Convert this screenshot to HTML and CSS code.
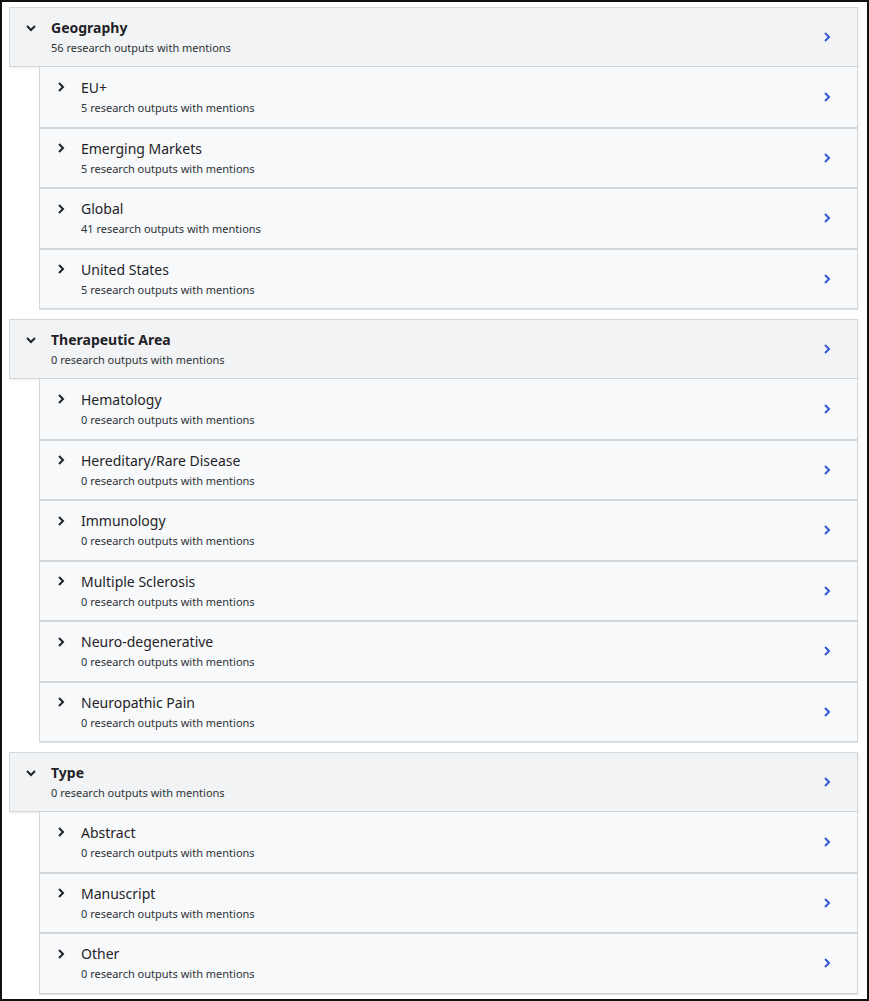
FILE: index.html
```html
<!DOCTYPE html>
<html>
<head>
<meta charset="utf-8">
<link rel="stylesheet" href="styles.css">
</head>
<body>
<div class="frame">
  <section class="group">
    <div class="row head">
      <span class="caret"><svg width="12" height="8" viewBox="0 0 12 8"><path d="M2 2l4 4 4-4" fill="none" stroke="#1f2328" stroke-width="2"/></svg></span>
      <div class="txt"><div class="title">Geography</div><div class="sub">56 research outputs with mentions</div></div>
      <span class="go"><svg width="8" height="12" viewBox="0 0 8 12"><path d="M2 2l4 4-4 4" fill="none" stroke="#3457d5" stroke-width="2"/></svg></span>
    </div>
    <div class="kids">
      <div class="row kid">
        <span class="caret"><svg width="8" height="12" viewBox="0 0 8 12"><path d="M2 2l4 4-4 4" fill="none" stroke="#1f2328" stroke-width="2"/></svg></span>
        <div class="txt"><div class="title">EU+</div><div class="sub">5 research outputs with mentions</div></div>
        <span class="go"><svg width="8" height="12" viewBox="0 0 8 12"><path d="M2 2l4 4-4 4" fill="none" stroke="#3457d5" stroke-width="2"/></svg></span>
      </div>
      <div class="row kid">
        <span class="caret"><svg width="8" height="12" viewBox="0 0 8 12"><path d="M2 2l4 4-4 4" fill="none" stroke="#1f2328" stroke-width="2"/></svg></span>
        <div class="txt"><div class="title">Emerging Markets</div><div class="sub">5 research outputs with mentions</div></div>
        <span class="go"><svg width="8" height="12" viewBox="0 0 8 12"><path d="M2 2l4 4-4 4" fill="none" stroke="#3457d5" stroke-width="2"/></svg></span>
      </div>
      <div class="row kid">
        <span class="caret"><svg width="8" height="12" viewBox="0 0 8 12"><path d="M2 2l4 4-4 4" fill="none" stroke="#1f2328" stroke-width="2"/></svg></span>
        <div class="txt"><div class="title">Global</div><div class="sub">41 research outputs with mentions</div></div>
        <span class="go"><svg width="8" height="12" viewBox="0 0 8 12"><path d="M2 2l4 4-4 4" fill="none" stroke="#3457d5" stroke-width="2"/></svg></span>
      </div>
      <div class="row kid">
        <span class="caret"><svg width="8" height="12" viewBox="0 0 8 12"><path d="M2 2l4 4-4 4" fill="none" stroke="#1f2328" stroke-width="2"/></svg></span>
        <div class="txt"><div class="title">United States</div><div class="sub">5 research outputs with mentions</div></div>
        <span class="go"><svg width="8" height="12" viewBox="0 0 8 12"><path d="M2 2l4 4-4 4" fill="none" stroke="#3457d5" stroke-width="2"/></svg></span>
      </div>
    </div>
  </section>

  <section class="group">
    <div class="row head">
      <span class="caret"><svg width="12" height="8" viewBox="0 0 12 8"><path d="M2 2l4 4 4-4" fill="none" stroke="#1f2328" stroke-width="2"/></svg></span>
      <div class="txt"><div class="title">Therapeutic Area</div><div class="sub">0 research outputs with mentions</div></div>
      <span class="go"><svg width="8" height="12" viewBox="0 0 8 12"><path d="M2 2l4 4-4 4" fill="none" stroke="#3457d5" stroke-width="2"/></svg></span>
    </div>
    <div class="kids">
      <div class="row kid">
        <span class="caret"><svg width="8" height="12" viewBox="0 0 8 12"><path d="M2 2l4 4-4 4" fill="none" stroke="#1f2328" stroke-width="2"/></svg></span>
        <div class="txt"><div class="title">Hematology</div><div class="sub">0 research outputs with mentions</div></div>
        <span class="go"><svg width="8" height="12" viewBox="0 0 8 12"><path d="M2 2l4 4-4 4" fill="none" stroke="#3457d5" stroke-width="2"/></svg></span>
      </div>
      <div class="row kid">
        <span class="caret"><svg width="8" height="12" viewBox="0 0 8 12"><path d="M2 2l4 4-4 4" fill="none" stroke="#1f2328" stroke-width="2"/></svg></span>
        <div class="txt"><div class="title">Hereditary/Rare Disease</div><div class="sub">0 research outputs with mentions</div></div>
        <span class="go"><svg width="8" height="12" viewBox="0 0 8 12"><path d="M2 2l4 4-4 4" fill="none" stroke="#3457d5" stroke-width="2"/></svg></span>
      </div>
      <div class="row kid">
        <span class="caret"><svg width="8" height="12" viewBox="0 0 8 12"><path d="M2 2l4 4-4 4" fill="none" stroke="#1f2328" stroke-width="2"/></svg></span>
        <div class="txt"><div class="title">Immunology</div><div class="sub">0 research outputs with mentions</div></div>
        <span class="go"><svg width="8" height="12" viewBox="0 0 8 12"><path d="M2 2l4 4-4 4" fill="none" stroke="#3457d5" stroke-width="2"/></svg></span>
      </div>
      <div class="row kid">
        <span class="caret"><svg width="8" height="12" viewBox="0 0 8 12"><path d="M2 2l4 4-4 4" fill="none" stroke="#1f2328" stroke-width="2"/></svg></span>
        <div class="txt"><div class="title">Multiple Sclerosis</div><div class="sub">0 research outputs with mentions</div></div>
        <span class="go"><svg width="8" height="12" viewBox="0 0 8 12"><path d="M2 2l4 4-4 4" fill="none" stroke="#3457d5" stroke-width="2"/></svg></span>
      </div>
      <div class="row kid">
        <span class="caret"><svg width="8" height="12" viewBox="0 0 8 12"><path d="M2 2l4 4-4 4" fill="none" stroke="#1f2328" stroke-width="2"/></svg></span>
        <div class="txt"><div class="title">Neuro-degenerative</div><div class="sub">0 research outputs with mentions</div></div>
        <span class="go"><svg width="8" height="12" viewBox="0 0 8 12"><path d="M2 2l4 4-4 4" fill="none" stroke="#3457d5" stroke-width="2"/></svg></span>
      </div>
      <div class="row kid">
        <span class="caret"><svg width="8" height="12" viewBox="0 0 8 12"><path d="M2 2l4 4-4 4" fill="none" stroke="#1f2328" stroke-width="2"/></svg></span>
        <div class="txt"><div class="title">Neuropathic Pain</div><div class="sub">0 research outputs with mentions</div></div>
        <span class="go"><svg width="8" height="12" viewBox="0 0 8 12"><path d="M2 2l4 4-4 4" fill="none" stroke="#3457d5" stroke-width="2"/></svg></span>
      </div>
    </div>
  </section>

  <section class="group">
    <div class="row head">
      <span class="caret"><svg width="12" height="8" viewBox="0 0 12 8"><path d="M2 2l4 4 4-4" fill="none" stroke="#1f2328" stroke-width="2"/></svg></span>
      <div class="txt"><div class="title">Type</div><div class="sub">0 research outputs with mentions</div></div>
      <span class="go"><svg width="8" height="12" viewBox="0 0 8 12"><path d="M2 2l4 4-4 4" fill="none" stroke="#3457d5" stroke-width="2"/></svg></span>
    </div>
    <div class="kids">
      <div class="row kid">
        <span class="caret"><svg width="8" height="12" viewBox="0 0 8 12"><path d="M2 2l4 4-4 4" fill="none" stroke="#1f2328" stroke-width="2"/></svg></span>
        <div class="txt"><div class="title">Abstract</div><div class="sub">0 research outputs with mentions</div></div>
        <span class="go"><svg width="8" height="12" viewBox="0 0 8 12"><path d="M2 2l4 4-4 4" fill="none" stroke="#3457d5" stroke-width="2"/></svg></span>
      </div>
      <div class="row kid">
        <span class="caret"><svg width="8" height="12" viewBox="0 0 8 12"><path d="M2 2l4 4-4 4" fill="none" stroke="#1f2328" stroke-width="2"/></svg></span>
        <div class="txt"><div class="title">Manuscript</div><div class="sub">0 research outputs with mentions</div></div>
        <span class="go"><svg width="8" height="12" viewBox="0 0 8 12"><path d="M2 2l4 4-4 4" fill="none" stroke="#3457d5" stroke-width="2"/></svg></span>
      </div>
      <div class="row kid">
        <span class="caret"><svg width="8" height="12" viewBox="0 0 8 12"><path d="M2 2l4 4-4 4" fill="none" stroke="#1f2328" stroke-width="2"/></svg></span>
        <div class="txt"><div class="title">Other</div><div class="sub">0 research outputs with mentions</div></div>
        <span class="go"><svg width="8" height="12" viewBox="0 0 8 12"><path d="M2 2l4 4-4 4" fill="none" stroke="#3457d5" stroke-width="2"/></svg></span>
      </div>
    </div>
  </section>
</div>
</body>
</html>
```

FILE: styles.css
```css
* { box-sizing: border-box; }
html, body { margin: 0; padding: 0; background: #fff; }
body {
  font-family: "Noto Sans", "Open Sans", sans-serif;
  color: #1f2328;
}
.frame {
  width: 869px;
  height: 1001px;
  border: 2px solid #111;
  padding: 5px 9px 0 7px;
  display: flex;
  flex-direction: column;
  gap: 10px;
  overflow: hidden;
}
.group { display: flex; flex-direction: column; }
.row {
  display: flex;
  align-items: center;
  border: 1px solid #d3d8dd;
}
.head {
  height: 60px;
  background: #f2f3f4;
  box-shadow: 1px 1px 2px rgba(0,0,0,0.08);
}
.kids {
  margin-left: 30px;
  display: flex;
  flex-direction: column;
}
.kid {
  height: 60.5px;
  background: #f8f9fa;
  border-top: none;
  box-shadow: 0 1px 0 #dde1e5, 1px 0 2px rgba(0,0,0,0.05);
}
.kid + .kid { border-top: 1px solid #d3d8dd; }
.caret {
  width: 41px;
  flex: none;
  display: flex;
  justify-content: center;
  align-items: center;
  margin-top: -19px;
}
.txt { flex: 1; min-width: 0; padding-top: 1px; }
.title { font-size: 14px; line-height: 20px; }
.head .title { font-weight: 700; }
.sub { font-size: 11px; line-height: 19px; color: #2e3338; }
.go {
  width: 20px;
  margin-right: 20px;
  flex: none;
  display: flex;
  justify-content: center;
}
```
